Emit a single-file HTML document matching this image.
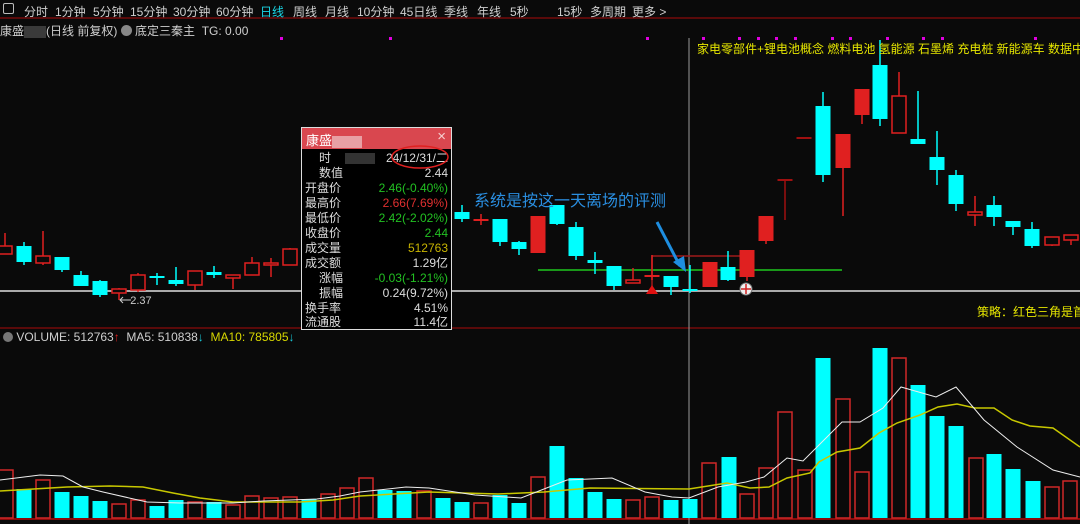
<!DOCTYPE html>
<html><head><meta charset="utf-8"><style>
*{margin:0;padding:0;box-sizing:border-box}
body{width:1080px;height:524px;background:#0a0a0a;overflow:hidden;position:relative;font-family:"Liberation Sans","Noto Sans CJK SC",sans-serif;color:#cfcfcf}
.t{position:absolute;white-space:nowrap;font-size:12px}
#bar{position:absolute;left:0;top:0;width:1080px;height:19px;border-bottom:2px solid #5a0a0a}
#box{position:absolute;left:301px;top:127px;width:151px;height:203px;border:1px solid #ddd;background:#000;overflow:hidden}
#box .hd{height:21px;background:#d9474f;color:#fff;font-size:13px;padding:2px 4px;position:relative}
#box .row{position:absolute;left:3px;right:3px;height:15px;line-height:15px;font-size:12px}
#box .row .l{position:absolute;left:0;color:#ddd}
#box .row .v{position:absolute;right:0}
</style></head><body>
<div id="bar"></div>
<div class="t" style="left:3px;top:3px;width:11px;height:11px;border:1px solid #bbb;border-radius:2px"></div>
<div class="t" style="left:24px;top:3px">分时</div>
<div class="t" style="left:55px;top:3px">1分钟</div>
<div class="t" style="left:93px;top:3px">5分钟</div>
<div class="t" style="left:130px;top:3px">15分钟</div>
<div class="t" style="left:173px;top:3px">30分钟</div>
<div class="t" style="left:216px;top:3px">60分钟</div>
<div class="t" style="left:260px;top:3px;color:#19d6e6">日线</div>
<div class="t" style="left:293px;top:3px">周线</div>
<div class="t" style="left:325px;top:3px">月线</div>
<div class="t" style="left:357px;top:3px">10分钟</div>
<div class="t" style="left:400px;top:3px">45日线</div>
<div class="t" style="left:444px;top:3px">季线</div>
<div class="t" style="left:477px;top:3px">年线</div>
<div class="t" style="left:510px;top:3px">5秒</div>
<div class="t" style="left:557px;top:3px">15秒</div>
<div class="t" style="left:590px;top:3px">多周期</div>
<div class="t" style="left:632px;top:3px">更多 &gt;</div>
<div class="t" style="left:0;top:22px">康盛<span style="display:inline-block;width:22px;height:12px;background:#3a3a3a;vertical-align:middle"></span>(日线 前复权) <span style="display:inline-block;width:11px;height:11px;border-radius:50%;background:#888;vertical-align:-1px"></span> 底定三秦主&nbsp; TG: 0.00</div>

<svg width="1080" height="524" style="position:absolute;left:0;top:0">
<g fill="#e000e0">
<rect x="280" y="37" width="3" height="3"/><rect x="389" y="37" width="3" height="3"/><rect x="646" y="37" width="3" height="3"/><rect x="702" y="37" width="3" height="3"/><rect x="738" y="37" width="3" height="3"/><rect x="757" y="37" width="3" height="3"/><rect x="775" y="37" width="3" height="3"/><rect x="794" y="37" width="3" height="3"/><rect x="831" y="37" width="3" height="3"/><rect x="849" y="37" width="3" height="3"/><rect x="886" y="37" width="3" height="3"/><rect x="922" y="37" width="3" height="3"/><rect x="941" y="37" width="3" height="3"/><rect x="1034" y="37" width="3" height="3"/>
</g>
<line x1="0" y1="291" x2="1080" y2="291" stroke="#aaa" stroke-width="2"/>
<line x1="0" y1="328" x2="1080" y2="328" stroke="#5a0a0a" stroke-width="2"/>
<line x1="0" y1="519" x2="1080" y2="519" stroke="#8a0a0a" stroke-width="2"/>
<line x1="689" y1="38" x2="689" y2="524" stroke="#999" stroke-width="1"/>
<line x1="538" y1="270" x2="842" y2="270" stroke="#1ec81e" stroke-width="1.5"/>
<polyline points="652,290 652,256 740,256" fill="none" stroke="#a01a1a" stroke-width="1.5"/>
<g id="candles"></g>
<g id="vols"></g>
<polygon points="646,294 652,285 658,294" fill="#e01010"/>
<circle cx="746" cy="289" r="6" fill="#eee" stroke="#777"/>
<path d="M741 289h10M746 284v10" stroke="#d02020" stroke-width="1.5"/>
<line x1="657" y1="222" x2="680" y2="266" stroke="#1e8ee0" stroke-width="3"/>
<polygon points="673,262 686,272 684,256" fill="#1e8ee0"/>
<line x1="120" y1="300" x2="131" y2="300" stroke="#ccc"/><path d="M123 297l-3 3 3 3" fill="none" stroke="#ccc"/>
<polyline id="y" fill="none" stroke="#c8c800" stroke-width="1.5" points="0,491 17,490 67,487 110,486 143,487 173,493 200,498 233,502 300,502 333,500 360,496 429,492 498,494 544,492 590,488 689,489 727,483 750,488 769,487 787,478 810,473 819,462 837,452 860,448 879,433 897,423 920,415 938,407 957,404 975,408 994,408 1012,420 1030,426 1053,428 1080,447"/>
<polyline id="w" fill="none" stroke="#eee" stroke-width="1" points="0,480 40,475 63,476 83,487 103,492 147,502 180,503 233,503 263,501 317,499 340,496 360,492 406,487 429,488 475,495 521,498 567,480 590,479 612,478 645,492 672,497 689,498 718,487 746,482 764,477 787,458 803,461 842,422 860,422 883,408 901,387 936,397 956,387 984,420 1017,447 1053,470 1080,477"/>
</svg>
<script>
var C=[[5,246,254,233,254,'h'],[24,246,262,242,265,'c'],[43,256,263,231,265,'h'],[62,257,270,257,272,'c'],[81,275,286,271,286,'c'],[100,281,295,280,297,'c'],[119,289,293,288,300,'h'],[138,275,290,273,292,'h'],[157,276,278,273,285,'c'],[176,280,284,267,286,'c'],[195,271,285,271,290,'h'],[214,272,275,266,278,'c'],[233,275,278,275,289,'h'],[252,263,275,257,275,'h'],[271,263,265,258,277,'h'],[290,249,265,248,265,'h'],
[462,212,219,205,222,'c'],[481,219,221,214,225,'r'],[500,219,242,219,246,'c'],[519,242,249,241,255,'c'],[538,216,253,216,253,'r'],[557,205,224,205,225,'c'],[576,227,256,222,260,'c'],[595,260,263,252,274,'c'],[614,266,286,266,290,'c'],[633,280,283,268,283,'h'],[652,275,277,255,280,'r'],[671,276,287,276,295,'c'],[690,289,291,265,293,'c'],[710,262,287,262,287,'r'],[728,267,280,251,281,'c'],[747,250,277,250,281,'r'],[766,216,241,216,244,'r'],[785,179,180,179,220,'d'],[804,137,138,137,138,'d'],[823,106,175,92,182,'c'],[843,134,168,134,216,'r'],[862,89,115,89,124,'r'],[880,65,119,40,126,'c'],[899,96,133,72,133,'h'],[918,139,144,91,139,'c'],[937,157,170,131,185,'c'],[956,175,204,170,211,'c'],[975,212,215,196,226,'h'],[994,205,217,196,226,'c'],[1013,221,227,221,235,'c'],[1032,229,246,222,248,'c'],[1052,237,245,237,246,'h'],[1071,235,240,235,245,'h']];
var s='';C.forEach(function(d){var x=d[0],col=d[5]=='c'?'#00ffff':(d[5]=='d'?'#a01010':'#e02020');
s+='<line x1="'+x+'" y1="'+d[3]+'" x2="'+x+'" y2="'+d[4]+'" stroke="'+col+'" stroke-width="1.5"/>';
if(d[5]=='h')s+='<rect x="'+(x-7)+'" y="'+d[1]+'" width="14" height="'+Math.max(d[2]-d[1],2)+'" fill="#0a0a0a" stroke="'+col+'" stroke-width="1.5"/>';
else s+='<rect x="'+(x-7.5)+'" y="'+d[1]+'" width="15" height="'+Math.max(d[2]-d[1],2)+'" fill="'+col+'"/>';});
document.getElementById('candles').innerHTML=s;
var V=[[6,470,'h'],[24,489,'c'],[43,480,'h'],[62,492,'c'],[81,496,'c'],[100,501,'c'],[119,504,'h'],[138,500,'h'],[157,506,'c'],[176,500,'c'],[195,502,'h'],[214,502,'c'],[233,505,'h'],[252,496,'h'],[271,498,'h'],[290,497,'h'],[309,499,'c'],[328,494,'h'],[347,488,'h'],[366,478,'h'],[385,490,'c'],[404,491,'c'],[424,491,'h'],[443,498,'c'],[462,502,'c'],[481,503,'h'],[500,495,'c'],[519,503,'c'],[538,477,'h'],[557,446,'c'],[576,478,'c'],[595,492,'c'],[614,499,'c'],[633,500,'h'],[652,497,'h'],[671,500,'c'],[690,499,'c'],[709,463,'h'],[729,457,'c'],[747,494,'h'],[766,468,'h'],[785,412,'h'],[805,470,'h'],[823,358,'c'],[843,399,'h'],[862,472,'h'],[880,348,'c'],[899,358,'h'],[918,385,'c'],[937,416,'c'],[956,426,'c'],[976,458,'h'],[994,454,'c'],[1013,469,'c'],[1033,481,'c'],[1052,487,'h'],[1070,481,'h']];
var v='';V.forEach(function(d){if(d[2]=='c')v+='<rect x="'+(d[0]-7.5)+'" y="'+d[1]+'" width="15" height="'+(518-d[1])+'" fill="#00ffff"/>';else v+='<rect x="'+(d[0]-7)+'" y="'+d[1]+'" width="14" height="'+(518-d[1])+'" fill="none" stroke="#d02828" stroke-width="1.5"/>';});
document.getElementById('vols').innerHTML=v;
</script>
<div class="t" style="left:118px;top:295px;font-size:11px;color:#ccc">&nbsp;&nbsp;&nbsp;&nbsp;2.37</div>
<div class="t" style="left:697px;top:40px;color:#e6e600">家电零部件+锂电池概念 燃料电池 氢能源 石墨烯 充电桩 新能源车 数据中心</div>
<div class="t" style="left:977px;top:303px;color:#e6e600">策略：红色三角是首</div>
<div class="t" style="left:474px;top:187px;font-size:16px;color:#2a8ee0">系统是按这一天离场的评测</div>
<div class="t" style="left:3px;top:330px"><span style="display:inline-block;width:10px;height:10px;border-radius:50%;background:#777;vertical-align:-1px"></span> VOLUME: 512763<span style="color:#e02020">↑</span>&nbsp; MA5: 510838<span style="color:#19c6d6">↓</span>&nbsp; <span style="color:#d8d800">MA10: 785805</span><span style="color:#19c6d6">↓</span></div>

<div id="box">
<div class="hd">康盛<span style="display:inline-block;width:30px;height:12px;background:#e8a0a4;vertical-align:middle"></span><span style="position:absolute;right:5px;top:0;font-size:15px;color:#f6d0d0">×</span></div>
<div class="row" style="top:23px"><span class="l" style="left:14px">时</span><span style="position:absolute;left:40px;top:2px;width:30px;height:11px;background:#333"></span><span class="v" style="color:#ddd">24/12/31/二</span></div>
<div class="row" style="top:38px"><span class="l" style="left:14px">数值</span><span class="v" style="color:#ddd">2.44</span></div>
<div class="row" style="top:53px"><span class="l">开盘价</span><span class="v" style="color:#22c022">2.46(-0.40%)</span></div>
<div class="row" style="top:68px"><span class="l">最高价</span><span class="v" style="color:#e03030">2.66(7.69%)</span></div>
<div class="row" style="top:83px"><span class="l">最低价</span><span class="v" style="color:#22c022">2.42(-2.02%)</span></div>
<div class="row" style="top:98px"><span class="l">收盘价</span><span class="v" style="color:#22c022">2.44</span></div>
<div class="row" style="top:113px"><span class="l">成交量</span><span class="v" style="color:#c8b400">512763</span></div>
<div class="row" style="top:128px"><span class="l">成交额</span><span class="v" style="color:#ddd">1.29亿</span></div>
<div class="row" style="top:143px"><span class="l" style="left:14px">涨幅</span><span class="v" style="color:#22c022">-0.03(-1.21%)</span></div>
<div class="row" style="top:158px"><span class="l" style="left:14px">振幅</span><span class="v" style="color:#ddd">0.24(9.72%)</span></div>
<div class="row" style="top:173px"><span class="l">换手率</span><span class="v" style="color:#ddd">4.51%</span></div>
<div class="row" style="top:187px"><span class="l">流通股</span><span class="v" style="color:#ddd">11.4亿</span></div>
</div>
<svg width="1080" height="524" style="position:absolute;left:0;top:0;pointer-events:none">
<ellipse cx="420" cy="157" rx="28" ry="11" fill="none" stroke="#e02020" stroke-width="1.5"/>
</svg>
</body></html>
